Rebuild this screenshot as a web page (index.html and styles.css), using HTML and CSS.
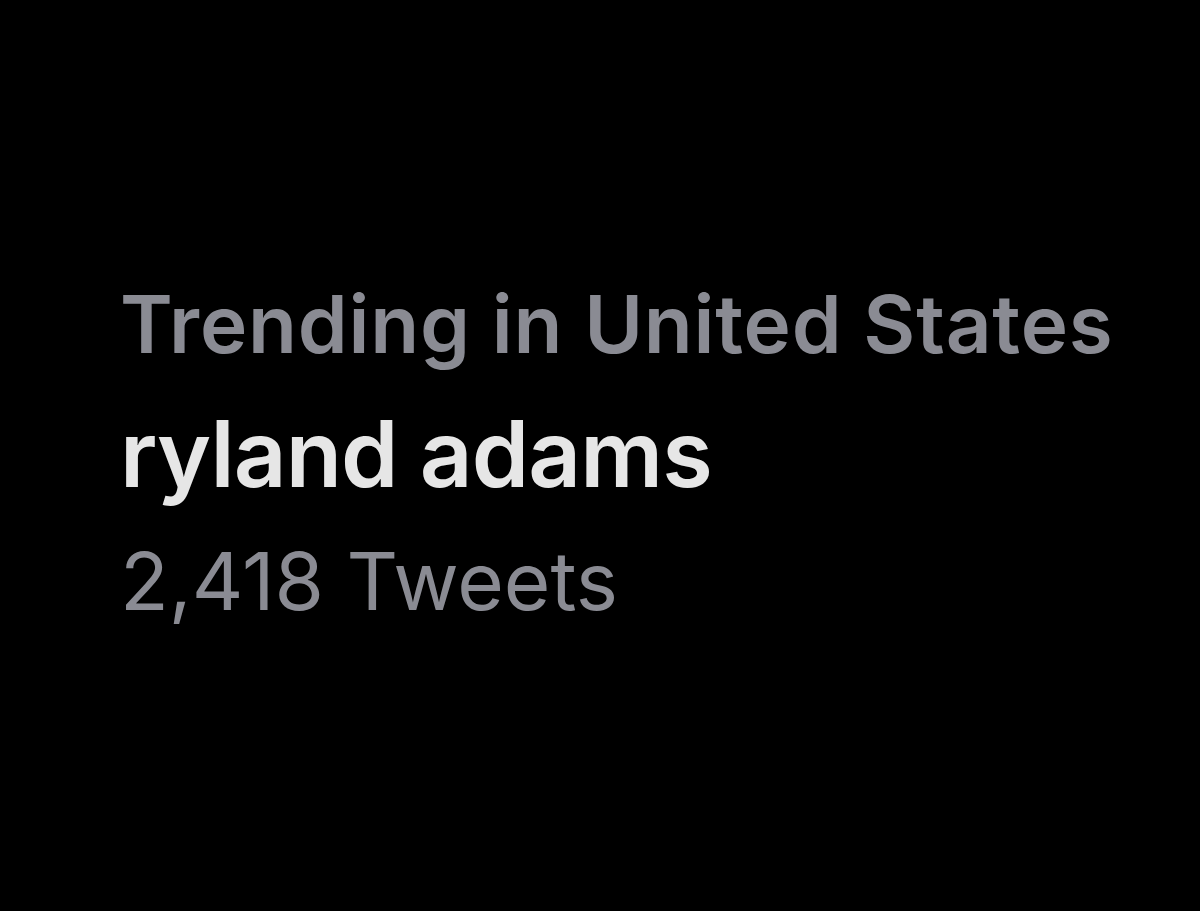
FILE: index.html
```html
<!DOCTYPE html>
<html>
<head>
<meta charset="utf-8">
<link rel="stylesheet" href="styles.css">
</head>
<body>
<main class="trend">
  <div class="context">Trending in United States</div>
  <div class="topic">ryland adams</div>
  <div class="count">2,418 Tweets</div>
</main>
</body>
</html>
```
FILE: styles.css
```css
html, body {
  margin: 0;
  padding: 0;
  background: #000;
  width: 1200px;
  height: 911px;
  overflow: hidden;
}
.trend {
  display: flex;
  flex-direction: column;
  padding: 269px 0 0 120px;
  font-family: Inter, "Liberation Sans", sans-serif;
}
.context {
  color: #8a8b93;
  font-size: 80px;
  font-weight: 600;
  line-height: 110px;
  letter-spacing: 0.8px;
}
.topic {
  color: #e6e6e6;
  font-size: 92px;
  font-weight: 600;
  line-height: 149px;
  letter-spacing: -0.9px;
}
.count {
  color: #8a8b93;
  font-size: 80px;
  font-weight: 400;
  line-height: 106px;
}
```
